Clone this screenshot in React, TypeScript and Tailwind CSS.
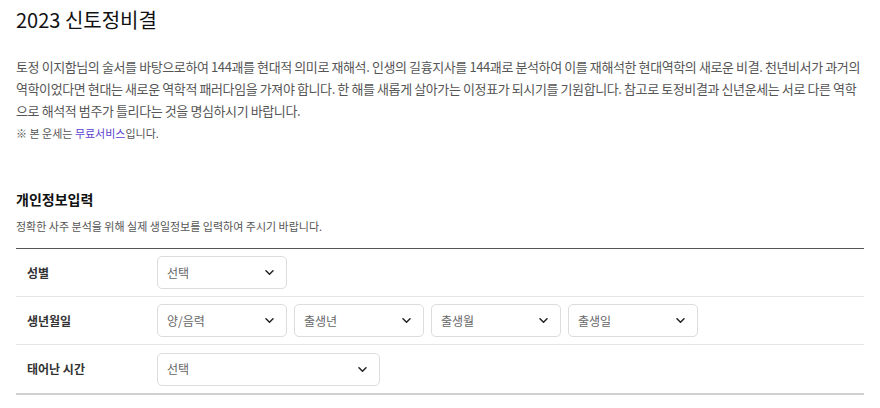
import { type FC } from "react";

type SelectBoxProps = {
    placeholder: string;
    width: string;
};

const Chevron: FC = () => (
    <svg width="9" height="5" viewBox="0 0 9 5" fill="none">
        <path d="M1 0.8l3.5 3.4L8 0.8" stroke="#222" strokeWidth="1.5" strokeLinecap="round" strokeLinejoin="round" />
    </svg>
);

const SelectBox: FC<SelectBoxProps> = ({ placeholder, width }) => (
    <div className={`${width} h-[33px] flex items-center justify-between pl-[9px] pr-[12px] border border-[#dcdcdc] rounded-[5px] bg-white`}>
        <span className="text-[12px] text-[#666]">{placeholder}</span>
        <Chevron />
    </div>
);

const rows = [
    { label: "성별", selects: [{ placeholder: "선택", width: "w-[130px]" }] },
    {
        label: "생년월일",
        selects: [
            { placeholder: "양/음력", width: "w-[130px]" },
            { placeholder: "출생년", width: "w-[130px]" },
            { placeholder: "출생월", width: "w-[130px]" },
            { placeholder: "출생일", width: "w-[130px]" },
        ],
    },
    { label: "태어난 시간", selects: [{ placeholder: "선택", width: "w-[223px]" }] },
];

const App: FC = () => {
    return (
        <div className="w-[880px] h-[408px] bg-white px-4 pt-[6px] font-['Noto_Sans_CJK_KR','Noto_Sans',sans-serif] text-[#222]">
            <h1 className="text-[20px] leading-[28px] font-normal text-[#111]">2023 신토정비결</h1>
            <p className="mt-[22px] text-[13px] leading-[22px] text-[#555] tracking-[-0.4px] whitespace-nowrap">
                토정 이지함님의 술서를 바탕으로하여 144괘를 현대적 의미로 재해석. 인생의 길흉지사를 144괘로 분석하여 이를 재해석한 현대역학의 새로운 비결. 천년비서가 과거의
                <br />
                역학이었다면 현대는 새로운 역학적 패러다임을 가져야 합니다. 한 해를 새롭게 살아가는 이정표가 되시기를 기원합니다. 참고로 토정비결과 신년운세는 서로 다른 역학
                <br />
                으로 해석적 범주가 틀리다는 것을 명심하시기 바랍니다.
            </p>
            <p className="mt-[2px] text-[11px] leading-[18px] text-[#555]">
                ※ 본 운세는 <span className="text-[#5a3fd1]">무료서비스</span>입니다.
            </p>

            <h2 className="mt-[47px] text-[14px] leading-[20px] font-bold text-[#111]">개인정보입력</h2>
            <p className="mt-[9px] text-[11px] leading-[16px] text-[#555]">정확한 사주 분석을 위해 실제 생일정보를 입력하여 주시기 바랍니다.</p>

            <div className="mt-[14px] border-t border-[#555] border-b-2 border-b-[#d0d0d0]">
                {rows.map((row, i) => (
                    <div
                        key={row.label}
                        className={`flex items-center h-[48px] ${i < rows.length - 1 ? "border-b border-[#e6e6e6]" : ""}`}
                    >
                        <div className="w-[141px] pl-[11px] text-[12px] font-bold text-[#333]">{row.label}</div>
                        <div className="flex gap-[7px]">
                            {row.selects.map((s, j) => (
                                <SelectBox key={j} placeholder={s.placeholder} width={s.width} />
                            ))}
                        </div>
                    </div>
                ))}
            </div>
        </div>
    );
};

export default App;
